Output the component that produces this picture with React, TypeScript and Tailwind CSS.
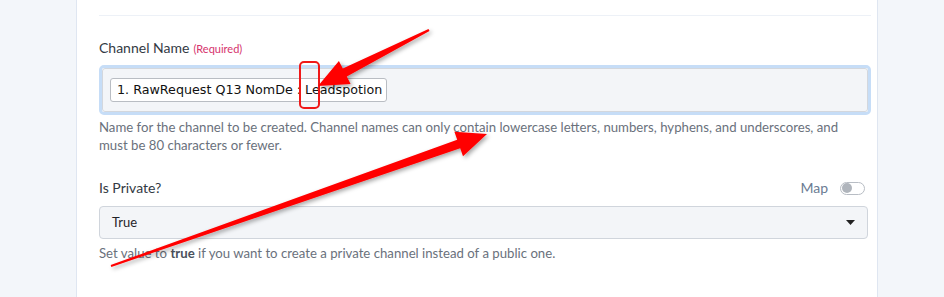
import React from 'react'

type Pt = [number, number]

// Builds a tapered arrow polygon from tail to tip
function arrowPoints(tail: Pt, tip: Pt, headLen: number, headW: number, shaftW: number, tailW: number) {
  const dx = tip[0] - tail[0]
  const dy = tip[1] - tail[1]
  const len = Math.hypot(dx, dy)
  const ux = dx / len
  const uy = dy / len
  const nx = -uy
  const ny = ux
  const bx = tip[0] - ux * headLen
  const by = tip[1] - uy * headLen
  const p = (x: number, y: number) => `${x.toFixed(1)},${y.toFixed(1)}`
  return [
    p(tail[0] + nx * tailW / 2, tail[1] + ny * tailW / 2),
    p(bx + nx * shaftW / 2, by + ny * shaftW / 2),
    p(bx + nx * headW / 2, by + ny * headW / 2),
    p(tip[0], tip[1]),
    p(bx - nx * headW / 2, by - ny * headW / 2),
    p(bx - nx * shaftW / 2, by - ny * shaftW / 2),
    p(tail[0] - nx * tailW / 2, tail[1] - ny * tailW / 2),
  ].join(' ')
}

function Annotations() {
  return (
    <svg className="absolute inset-0 pointer-events-none" width="944" height="297" viewBox="0 0 944 297">
      <defs>
        <filter id="sh" x="-20%" y="-20%" width="140%" height="140%">
          <feDropShadow dx="2" dy="2" stdDeviation="2" floodColor="#000" floodOpacity="0.35" />
        </filter>
      </defs>
      <rect x="300" y="62" width="19" height="46" rx="4" fill="none" stroke="#f01818" strokeWidth="2" />
      <polygon points={arrowPoints([429, 30], [318, 86], 30, 26, 9, 2)} fill="#ff0000" filter="url(#sh)" />
      <polygon points={arrowPoints([111, 266], [487, 134], 30, 26, 9, 2)} fill="#ff0000" filter="url(#sh)" />
    </svg>
  )
}

export default function App() {
  return (
    <div className="relative flex h-[297px] w-[944px] overflow-hidden bg-[#f3f6fa] font-['Lato',sans-serif]">
      <div className="w-[76px] shrink-0" />
      <div className="w-[802px] shrink-0 bg-white border-l border-r border-[#dfe6f1] pl-[22px] pr-[6px]">
        <div className="mt-[15px] h-px bg-[#edf1f7]" />

        <div className="mt-[22px] flex items-baseline gap-1 leading-[20px]">
          <span className="text-[14px] text-[#333a44]">Channel Name</span>
          <span className="text-[11px] text-[#d6336c]">(Required)</span>
        </div>

        <div className="mt-[6px] rounded-[5px] border-[3px] border-[#c6ddf7]">
          <div className="flex h-[44px] items-center rounded-[3px] border border-[#d3d7dd] bg-[#f3f5f8] px-[7px]">
            <span className="rounded-[3px] border border-[#b9bdc3] bg-white pl-[6px] pr-[4px] py-[3px] font-['DejaVu_Sans',sans-serif] text-[12.7px] leading-[16px] text-[#111]">
              1. RawRequest Q13 NomDe : Leadspotion
            </span>
          </div>
        </div>

        <p className="mt-[3px] text-[13.2px] leading-[18px] text-[#6a717c] pr-[20px]">
          Name for the channel to be created. Channel names can only contain lowercase letters, numbers, hyphens, and underscores, and must be 80 characters or fewer.
        </p>

        <div className="mt-[24px] flex h-[20px] items-center justify-between pr-[6px]">
          <span className="text-[14px] leading-[20px] text-[#333a44]">Is Private?</span>
          <div className="flex items-center gap-[12px]">
            <span className="text-[14px] leading-[20px] text-[#6b7c93]">Map</span>
            <div className="flex h-[13px] w-[25px] items-center rounded-full border border-[#b8bdc4] bg-white px-[1px]">
              <div className="h-[10px] w-[10px] rounded-full bg-[#b0b5bc]" />
            </div>
          </div>
        </div>

        <div className="mt-[8px] mr-[3px] flex h-[33px] items-center justify-between rounded-[4px] border border-[#d0d5dc] bg-[#f3f5f8] pl-[12px] pr-[12px]">
          <span className="text-[13px] text-[#1f2329]">True</span>
          <svg width="9" height="5" viewBox="0 0 9 5">
            <path d="M0 0 L9 0 L4.5 5 Z" fill="#222" />
          </svg>
        </div>

        <p className="mt-[4px] text-[13.2px] leading-[20px] text-[#6a717c]">
          Set value to <b className="font-bold text-[#4a515c]">true</b> if you want to create a private channel instead of a public one.
        </p>
      </div>
      <div className="flex-1" />
      <Annotations />
    </div>
  )
}
